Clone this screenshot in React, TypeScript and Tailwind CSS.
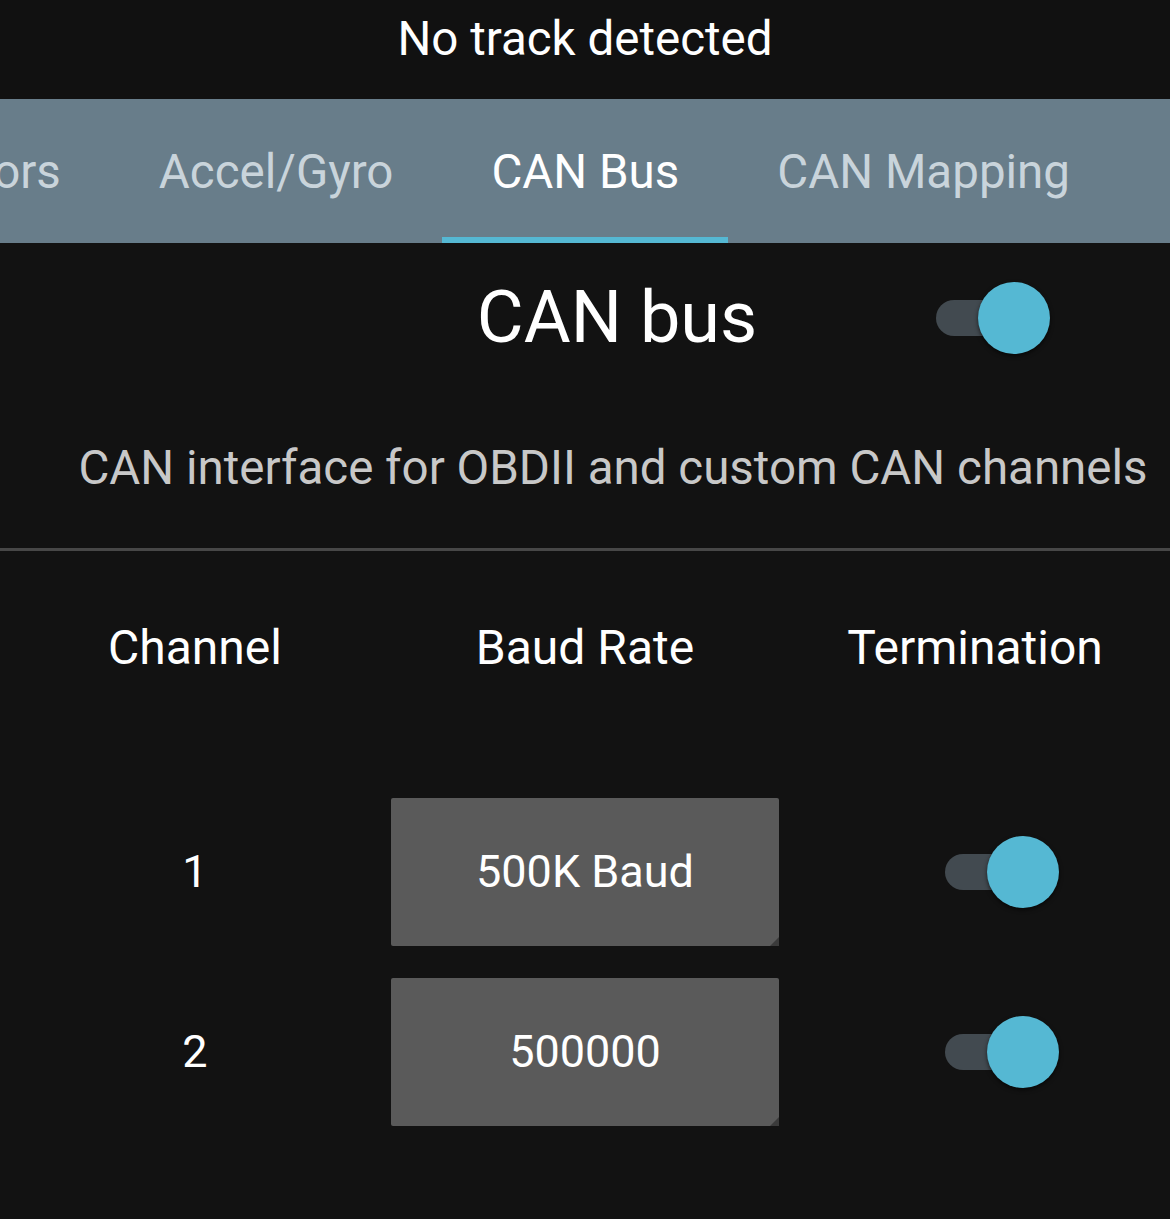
import React from "react"

function Toggle() {
  return (
    <div className="relative w-[114px] h-[72px] flex items-center">
      <div className="w-[90px] h-[36px] rounded-full bg-[#424a50]" />
      <div className="absolute right-0 top-0 w-[72px] h-[72px] rounded-full bg-[#55b8d3] shadow-[0_2px_4px_rgba(0,0,0,0.6)]" />
    </div>
  )
}

function Spinner({ label }: { label: string }) {
  return (
    <div className="relative w-[388px] h-[148px] mx-auto bg-[#5a5a5a] rounded-[2px] flex items-center justify-center text-white text-[45px]">
      {label}
      <div className="absolute right-0 bottom-0 w-0 h-0 border-l-[9px] border-l-transparent border-b-[9px] border-b-[#3a3a3a]" />
    </div>
  )
}

export default function App() {
  const tabs = [
    { label: "Sensors", active: false },
    { label: "Accel/Gyro", active: false },
    { label: "CAN Bus", active: true },
    { label: "CAN Mapping", active: false },
  ]

  const rows = [
    { channel: "1", baud: "500K Baud" },
    { channel: "2", baud: "500000" },
  ]

  return (
    <div className="w-[1170px] h-[1219px] bg-[#121212] overflow-hidden font-['Roboto',sans-serif]">
      {/* Status bar */}
      <div className="h-[99px] bg-[#111111] flex items-center justify-center text-white text-[47.5px] pb-[20px]">
        No track detected
      </div>

      {/* Tabs */}
      <div className="h-[144px] bg-[#687d8a] flex items-stretch ml-[-160px]">
        {tabs.map((t) => (
          <div key={t.label} className="relative shrink-0 px-[49px] pt-[4px] flex items-center text-[47.5px] whitespace-nowrap">
            <span className={t.active ? "text-white" : "text-[#c9d4db]"}>{t.label}</span>
            {t.active && <div className="absolute left-0 right-0 bottom-0 h-[6px] bg-[#55b8d3]" />}
          </div>
        ))}
      </div>

      {/* Header */}
      <div className="relative h-[150px] flex items-center justify-center">
        <h1 className="text-white text-[72px] ml-[64px]">CAN bus</h1>
        <div className="absolute left-[936px] top-[39px]">
          <Toggle />
        </div>
      </div>

      <p className="text-[#c8c8c8] text-[47.5px] text-center pl-[56px] pt-[40px] h-[155px] whitespace-nowrap">
        CAN interface for OBDII and custom CAN channels
      </p>

      <div className="h-[3px] bg-[#474747]" />

      {/* Table */}
      <div className="grid grid-cols-3 text-white text-[48px] pt-[61px]">
        <div className="text-center">Channel</div>
        <div className="text-center">Baud Rate</div>
        <div className="text-center">Termination</div>
      </div>

      <div className="flex flex-col gap-[32px] pt-[114px]">
        {rows.map((r) => (
          <div key={r.channel} className="grid grid-cols-3 items-center h-[148px] text-white text-[45px]">
            <div className="text-center">{r.channel}</div>
            <Spinner label={r.baud} />
            <div className="flex pl-[165px]">
              <Toggle />
            </div>
          </div>
        ))}
      </div>
    </div>
  )
}
